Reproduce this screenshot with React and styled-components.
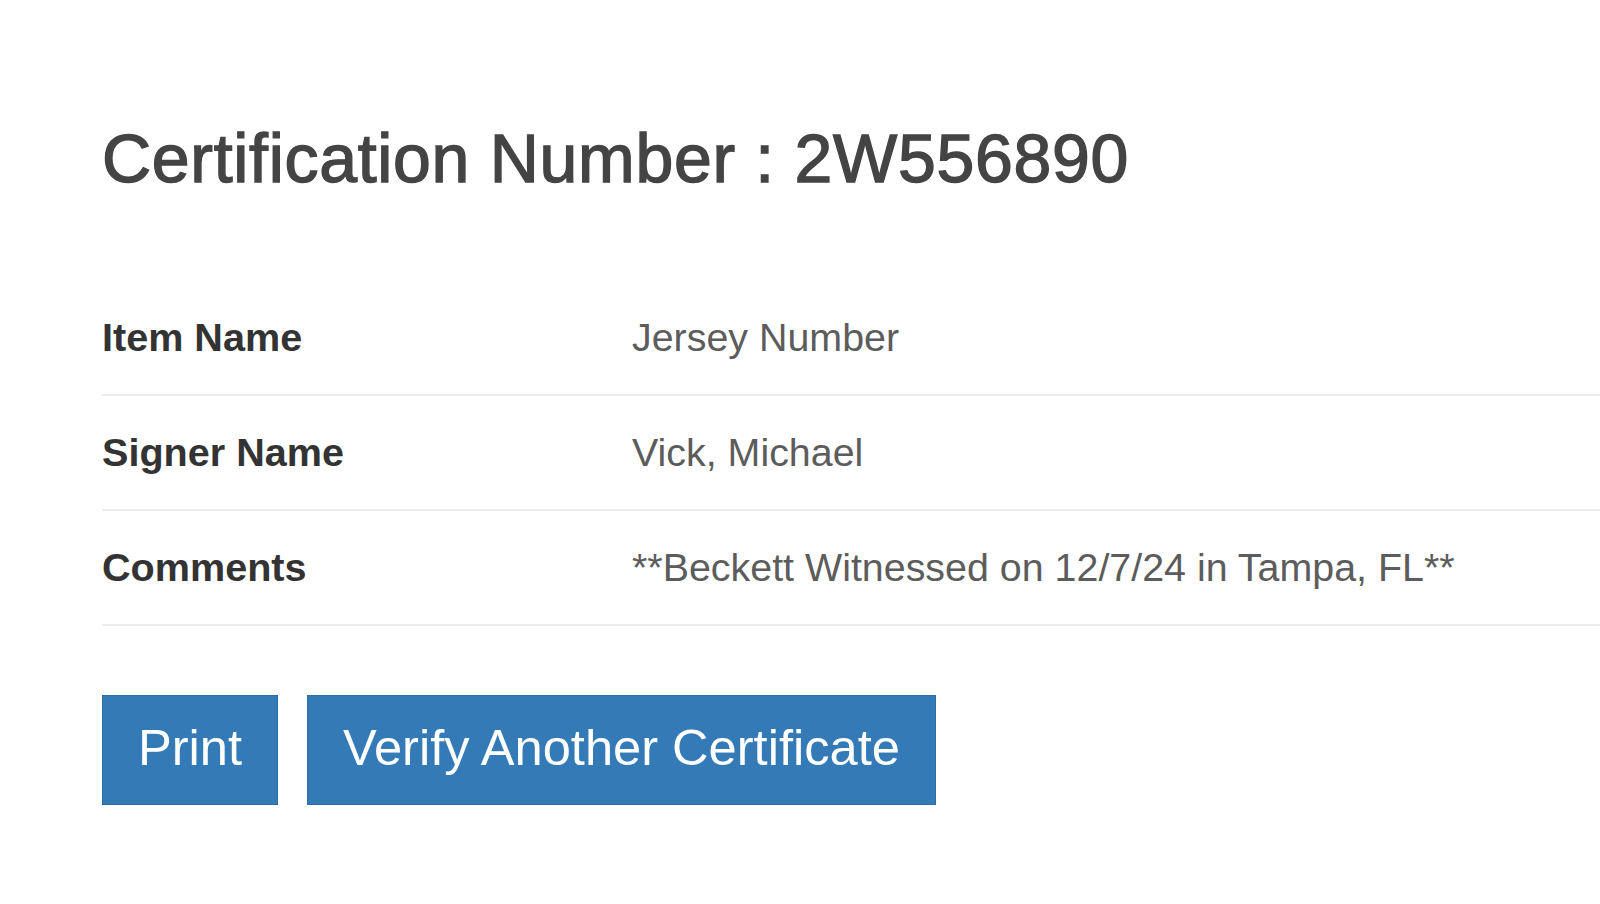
import React from "react";
import styled, { createGlobalStyle } from "styled-components";

const GlobalStyle = createGlobalStyle`
  html, body {
    margin: 0;
    padding: 0;
    background: #fff;
  }
  body {
    font-family: "Liberation Sans", Arial, sans-serif;
    color: #333;
  }
`;

const rows = [
  { label: "Item Name", value: "Jersey Number" },
  { label: "Signer Name", value: "Vick, Michael" },
  { label: "Comments", value: "**Beckett Witnessed on 12/7/24 in Tampa, FL**" },
];

export default function App() {
  return (
    <>
      <GlobalStyle />
      <Page>
        <Title>Certification Number : 2W556890</Title>
        <Table>
          <tbody>
            {rows.map((row) => (
              <Row key={row.label}>
                <Label>{row.label}</Label>
                <Value>{row.value}</Value>
              </Row>
            ))}
          </tbody>
        </Table>
        <Actions>
          <Button type="button">Print</Button>
          <Button type="button">Verify Another Certificate</Button>
        </Actions>
      </Page>
    </>
  );
}

const Page = styled.div`
  padding: 121px 0 0 102px;
`;

const Title = styled.h1`
  margin: 0 0 85px;
  font-size: 68px;
  line-height: 1.1;
  font-weight: normal;
  color: #444;
  -webkit-text-stroke: 1.4px #444;
  letter-spacing: 0.7px;
`;

const Table = styled.table`
  width: 100%;
  border-collapse: collapse;
  border-spacing: 0;
`;

const Row = styled.tr`
  border-bottom: 2px solid #ececec;
`;

const Cell = styled.td`
  padding: 33px 0 34px;
  font-size: 40px;
  line-height: 46px;
  vertical-align: top;
`;

const Label = styled(Cell)`
  width: 530px;
  font-weight: bold;
  font-size: 39.6px;
  color: #333;
`;

const Value = styled(Cell)`
  color: #5c5c5c;
  font-size: 39.4px;
`;

const Actions = styled.div`
  display: flex;
  gap: 29px;
  margin-top: 69px;
`;

const Button = styled.button`
  font-family: "Liberation Sans", Arial, sans-serif;
  font-size: 50.6px;
  line-height: 66px;
  padding: 19px 35px 23px;
  color: #fff;
  background: #337ab7;
  border: 1px solid #2e6da4;
  border-radius: 0;
  cursor: pointer;
`;
